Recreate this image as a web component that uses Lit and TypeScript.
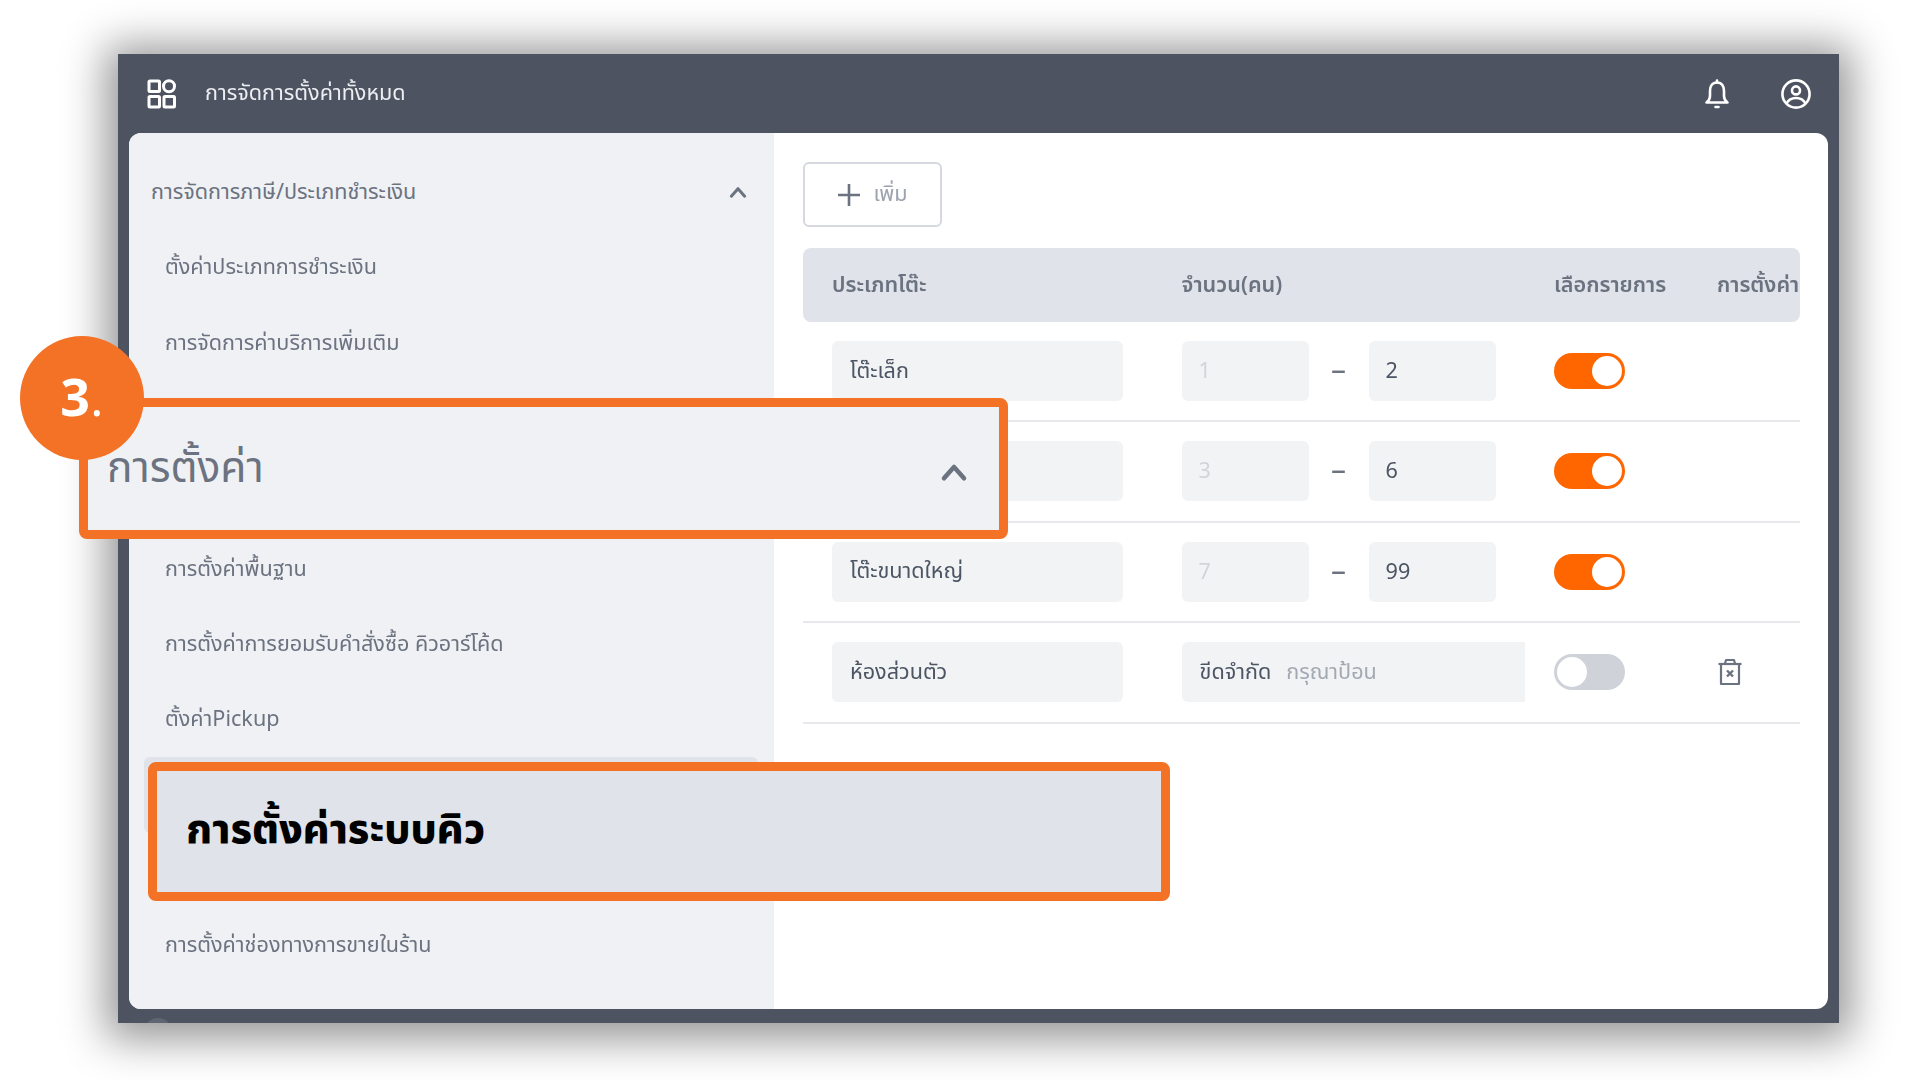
import { LitElement, html, css, svg } from "lit";
import { customElement } from "lit/decorators.js";

const chevron = (size: number) => html`<svg class="chev" width=${size} height=${size} viewBox="0 0 24 24" fill="none" stroke="currentColor" stroke-width="3.6" stroke-linecap="round" stroke-linejoin="round"><path d="M4 17 L12 8 L20 17" /></svg>`;

const gridIcon = html`<svg width="30" height="30" viewBox="0 0 30 30" fill="none" stroke="#fff" stroke-width="3">${svg`
  <rect x="2" y="2" width="10.5" height="10.5" rx="1" />
  <circle cx="22" cy="7.2" r="5.5" />
  <rect x="2" y="17.5" width="10.5" height="10.5" rx="1" />
  <rect x="17" y="17.5" width="10.5" height="10.5" rx="1" />
`}</svg>`;

const bellIcon = html`<svg width="26" height="30" viewBox="0 0 26 30" fill="none" stroke="#fff" stroke-width="2.6" stroke-linecap="round" stroke-linejoin="round">${svg`
  <path d="M13 3.5 C8 3.5 6 7.5 6 12 L6 17 C6 20 4.5 22 2.5 23.5 L23.5 23.5 C21.5 22 20 20 20 17 L20 12 C20 7.5 18 3.5 13 3.5 Z" />
  <path d="M13 1.5 L13 3.5 M11.5 28 L14.5 28" />
`}</svg>`;

const userIcon = html`<svg width="32" height="32" viewBox="0 0 32 32" fill="none" stroke="#fff" stroke-width="2.6">${svg`
  <circle cx="16" cy="16" r="13.6" />
  <circle cx="16" cy="12.4" r="4" />
  <path d="M6.5 25.5 C8.5 21.5 12 20 16 20 C20 20 23.5 21.5 25.5 25.5" />
`}</svg>`;

const trashIcon = html`<svg width="26" height="28" viewBox="0 0 26 28" fill="none" stroke="#6b7280" stroke-width="2.2" stroke-linejoin="round">${svg`
  <path d="M1.5 6 L24.5 6" />
  <path d="M8 5.5 L9 2 L17 2 L18 5.5" />
  <rect x="4" y="6" width="18" height="20" />
  <path d="M10 12.5 L16 18.5 M16 12.5 L10 18.5" stroke-width="2.4" />
`}</svg>`;

const topMenu = ["ตั้งค่าประเภทการชำระเงิน", "การจัดการค่าบริการเพิ่มเติม"];
const midMenu = ["การตั้งค่าพื้นฐาน", "การตั้งค่าการยอมรับคำสั่งซื้อ คิวอาร์โค้ด", "ตั้งค่าPickup"];

const tableRows = [
  { name: "โต๊ะเล็ก", min: "1", max: "2", on: true },
  { name: "โต๊ะขนาดกลาง", min: "3", max: "6", on: true },
  { name: "โต๊ะขนาดใหญ่", min: "7", max: "99", on: true },
];

@customElement("app-root")
export class AppRoot extends LitElement {
  static override styles = css`
    :host {
      display: block;
      width: 1920px;
      height: 1080px;
      background: #fff;
      font-family: "Noto Sans", "Noto Sans Thai", "Noto Sans Thai UI", sans-serif;
      overflow: hidden;
    }
    .stage {
      position: relative;
      width: 1920px;
      height: 1080px;
      padding: 54px 0 0 118px;
      box-sizing: border-box;
    }
    .frame {
      position: relative;
      overflow: hidden;
      width: 1721px;
      height: 969px;
      background: #4d5360;
      box-shadow: 0 4px 40px 12px rgba(0, 0, 0, 0.42);
      display: flex;
      flex-direction: column;
    }
    .topbar {
      height: 79px;
      flex: none;
      display: flex;
      align-items: center;
      padding: 0 27px 0 29px;
      color: #eceef1;
      font-size: 21.6px;
      filter: blur(0.5px);
    }
    .topbar .title {
      margin-left: 28px;
      flex: 1;
    }
    .topbar .icons {
      display: flex;
      align-items: center;
      gap: 50px;
    }
    .topbar svg {
      display: block;
    }
    .card {
      flex: 1;
      display: flex;
      margin: 0 11px 14px 11px;
      border-radius: 12px;
      overflow: hidden;
      background: #fff;
      filter: blur(0.5px);
    }
    .side {
      width: 645px;
      flex: none;
      background: #f0f1f4;
      padding-top: 22px;
      box-sizing: border-box;
      color: #6b7280;
      font-size: 21.6px;
    }
    .side-row {
      height: 75.3px;
      display: flex;
      align-items: center;
      padding-left: 36px;
    }
    .side-row.group {
      padding: 0 26px 0 22px;
      justify-content: space-between;
    }
    .side-row.group .chev {
      margin-top: -1px;
    }
    .side-row.selected {
      margin: 0 16px 75.3px 15px;
      padding: 0;
      background: #e0e3ea;
      border-radius: 6px;
    }
    .gap {
      height: 150.6px;
    }
    .main {
      flex: 1;
      padding: 29px 28px 0 29px;
      color: #4b5563;
      font-size: 21.6px;
    }
    .add {
      width: 139px;
      height: 65px;
      box-sizing: border-box;
      border: 2px solid #d5d8de;
      border-radius: 6px;
      display: flex;
      align-items: center;
      justify-content: center;
      gap: 12px;
      color: #9ca3af;
    }
    .add svg {
      display: block;
    }
    .thead,
    .row {
      display: grid;
      grid-template-columns: 349.6px 372.4px 163px 1fr;
      padding-left: 29px;
    }
    .thead {
      margin-top: 21px;
      height: 74px;
      align-items: center;
      background: #e0e3ea;
      border-radius: 8px;
      font-weight: 600;
      color: #6b7280;
      overflow: hidden;
      white-space: nowrap;
    }
    .row {
      height: 100.4px;
      box-sizing: border-box;
      padding-top: 19px;
      border-bottom: 2px solid #e7e9ec;
      align-items: start;
    }
    .input {
      height: 60px;
      box-sizing: border-box;
      background: #f2f3f5;
      border-radius: 6px;
      padding-left: 18px;
      display: flex;
      align-items: center;
    }
    .name {
      width: 291px;
    }
    .num {
      width: 127px;
      padding-left: 17px;
      padding-bottom: 3px;
    }
    .num.off {
      color: #d1d5db;
    }
    .range {
      display: flex;
      align-items: center;
    }
    .dash {
      width: 60px;
      text-align: center;
      font-size: 30px;
      line-height: 60px;
      height: 60px;
      margin-top: -4px;
      color: #6b7280;
    }
    .limit {
      width: 343px;
      border-radius: 6px 0 0 6px;
      gap: 15px;
    }
    .limit .hint {
      color: #a3a9b3;
    }
    .cell {
      height: 60px;
      display: flex;
      align-items: center;
    }
    .toggle {
      width: 71px;
      height: 36px;
      box-sizing: border-box;
      border-radius: 18px;
      padding: 3px;
      display: flex;
      justify-content: flex-end;
      background: #ff6600;
    }
    .toggle.off {
      background: #cfd2d8;
      justify-content: flex-start;
    }
    .toggle i {
      width: 30px;
      height: 30px;
      border-radius: 50%;
      background: #fff;
    }
    .trash svg {
      display: block;
    }
    .peek {
      position: absolute;
      left: 26px;
      top: 964px;
      width: 28px;
      height: 28px;
      border-radius: 50%;
      background: #5f6571;
    }
    .mark {
      position: absolute;
      box-sizing: border-box;
      border: 9px solid #f47225;
      border-radius: 8px;
      display: flex;
      align-items: center;
    }
    .mark-settings {
      left: 79px;
      top: 398px;
      width: 929px;
      height: 141px;
      background: #f0f1f4;
      padding: 0 30px 0 19px;
      justify-content: space-between;
      font-size: 42.5px;
      color: #6b7280;
    }
    .mark-settings .chev {
      margin-top: 6px;
    }
    .mark-queue {
      left: 148px;
      top: 762px;
      width: 1022px;
      height: 139px;
      background: #e0e3ea;
      padding: 0 0 3px 29px;
      font-size: 41px;
      font-weight: 800;
      color: #000;
    }
    .step {
      position: absolute;
      left: 20px;
      top: 336px;
      width: 124px;
      height: 124px;
      box-sizing: border-box;
      padding-bottom: 5px;
      border-radius: 50%;
      background: #f47225;
      color: #fff;
      display: flex;
      align-items: center;
      justify-content: center;
      font-family: "Open Sans", "Noto Sans", sans-serif;
      font-size: 52px;
      font-weight: 700;
    }
    .step span {
      font-weight: 400;
    }
  `;

  override render() {
    return html`
      <div class="stage">
        <div class="frame">
          <div class="topbar">
            ${gridIcon}
            <div class="title">การจัดการตั้งค่าทั้งหมด</div>
            <div class="icons">${bellIcon}${userIcon}</div>
          </div>
          <div class="card">
            <div class="side">
              <div class="side-row group">
                <span>การจัดการภาษี/ประเภทชำระเงิน</span>${chevron(20)}
              </div>
              ${topMenu.map((t) => html`<div class="side-row">${t}</div>`)}
              <div class="gap"></div>
              ${midMenu.map((t) => html`<div class="side-row">${t}</div>`)}
              <div class="side-row selected"></div>
              <div class="side-row">การตั้งค่าช่องทางการขายในร้าน</div>
            </div>
            <div class="main">
              <div class="add">
                <svg width="24" height="24" viewBox="0 0 24 24" stroke="#6b7280" stroke-width="2.6"><path d="M12 1 V23 M1 12 H23" /></svg>
                <span>เพิ่ม</span>
              </div>
              <div class="thead">
                <div>ประเภทโต๊ะ</div>
                <div>จำนวน(คน)</div>
                <div>เลือกรายการ</div>
                <div>การตั้งค่า</div>
              </div>
              ${tableRows.map(
                (r) => html`
                  <div class="row">
                    <div class="input name">${r.name}</div>
                    <div class="range">
                      <div class="input num off">${r.min}</div>
                      <div class="dash">–</div>
                      <div class="input num">${r.max}</div>
                    </div>
                    <div class="cell"><div class="toggle"><i></i></div></div>
                    <div></div>
                  </div>
                `
              )}
              <div class="row">
                <div class="input name">ห้องส่วนตัว</div>
                <div class="input limit"><span>ขีดจำกัด</span><span class="hint">กรุณาป้อน</span></div>
                <div class="cell"><div class="toggle off"><i></i></div></div>
                <div class="cell trash">${trashIcon}</div>
              </div>
            </div>
          </div>
          <div class="peek"></div>
        </div>

        <div class="mark mark-settings"><span>การตั้งค่า</span>${chevron(30)}</div>
        <div class="mark mark-queue">การตั้งค่าระบบคิว</div>
        <div class="step">3<span>.</span></div>
      </div>
    `;
  }
}
